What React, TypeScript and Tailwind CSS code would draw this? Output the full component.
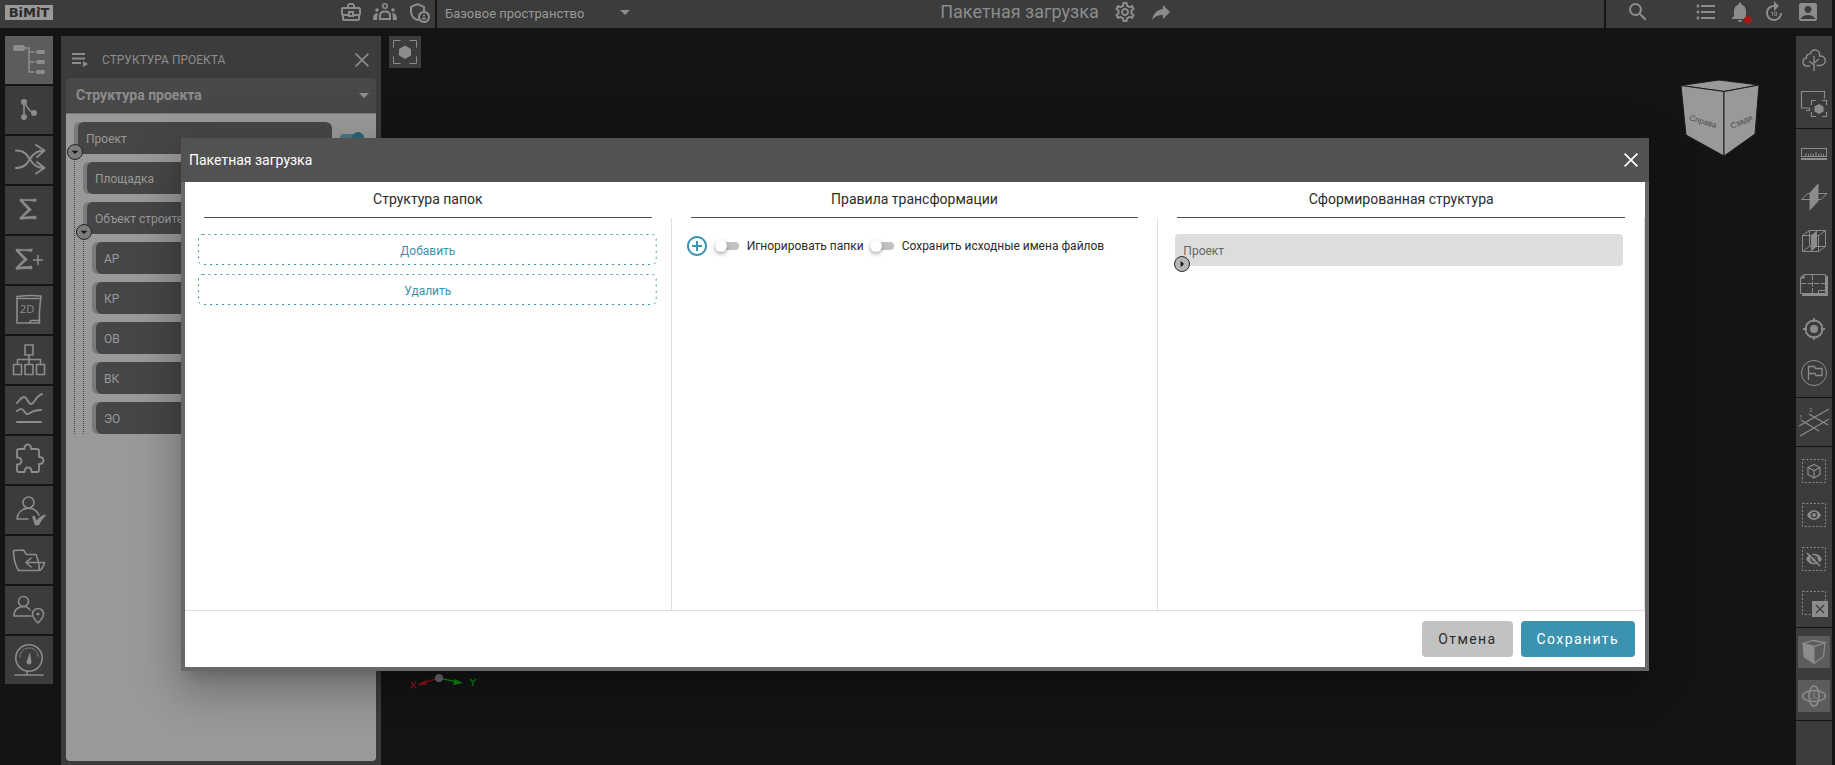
import { useState } from 'react';
import type { ReactNode } from 'react';
import {
  MdAddCircleOutline,
  MdAccountBox,
  MdArrowDropDown,
  MdForward10,
  MdFormatListBulleted,
  MdNotifications,
  MdOutlineAdminPanelSettings,
  MdOutlineBusinessCenter,
  MdOutlineSettings,
  MdReply,
  MdSearch,
} from 'react-icons/md';

interface IconProps {
  children: ReactNode;
}

interface ToolItem {
  label: string;
  icon: ReactNode;
  active?: boolean;
}

// 48px icons for the left rail
function RailIcon({ children }: IconProps) {
  return (
    <svg viewBox="0 0 48 48" className="w-12 h-12" fill="none" stroke="currentColor" strokeWidth="1.6" strokeLinecap="round" strokeLinejoin="round">
      {children}
    </svg>
  );
}

// 32px icons for the right toolbar
function ToolIcon({ children }: IconProps) {
  return (
    <svg viewBox="0 0 32 32" className="w-8 h-8" fill="none" stroke="currentColor" strokeWidth="1">
      {children}
    </svg>
  );
}

function CloseIcon() {
  return (
    <svg viewBox="0 0 14 14" className="w-3.5 h-3.5" fill="none" stroke="currentColor" strokeWidth="1.7">
      <path d="M.6.6l12.8 12.8M13.4.6L.6 13.4" />
    </svg>
  );
}

const railItems: ToolItem[] = [
  {
    label: 'Структура проекта',
    active: true,
    icon: (
      <RailIcon>
        <rect x="8" y="9" width="12" height="6" rx="2.5" fill="currentColor" stroke="none" />
        <path d="M20 12h4v24M24 16h5M24 26h5M24 36h5" />
        <rect x="31" y="14" width="9" height="4" rx="1.8" fill="currentColor" stroke="none" />
        <rect x="31" y="24" width="9" height="4" rx="1.8" fill="currentColor" stroke="none" />
        <rect x="31" y="34" width="9" height="4" rx="1.8" fill="currentColor" stroke="none" />
      </RailIcon>
    ),
  },
  {
    label: 'Версии',
    icon: (
      <RailIcon>
        <g fill="currentColor" stroke="none">
          <circle cx="19" cy="16" r="3" />
          <circle cx="19" cy="31" r="3" />
          <circle cx="29" cy="27" r="3" />
        </g>
        <path d="M19 16v15M20 17c2 5 4 8 9 10" />
      </RailIcon>
    ),
  },
  {
    label: 'Сопоставление',
    icon: (
      <RailIcon>
        <path d="M11 14.5c8 0 11 4 14 9s7 8.500 14 8.500M11 32c8 0 11-4 14-9s7-8.500 14-8.500M31 9l8.500 5.500L32 21M32 26l7.500 6L31 37.5" strokeWidth="1.9" />
      </RailIcon>
    ),
  },
  {
    label: 'Сумма',
    icon: (
      <RailIcon>
        <path d="M31 13v2.500c-5-1-9-1-13-.500l8.500 8.500L18 31c5-.5 9-.5 13-1v3c-5-.5-10-.5-16 .5v-2l8-8-8-8.500v-2c6 .5 11 .5 16 0z" fill="currentColor" strokeWidth=".5" />
      </RailIcon>
    ),
  },
  {
    label: 'Сумма плюс',
    icon: (
      <RailIcon>
        <path d="M31 13v2.500c-5-1-9-1-13-.500l8.500 8.500L18 31c5-.5 9-.5 13-1v3c-5-.5-10-.5-16 .5v-2l8-8-8-8.500v-2c6 .5 11 .5 16 0z" transform="translate(-4)" fill="currentColor" strokeWidth=".5" />
        <path d="M33 19.500v9M28.500 24h9" />
      </RailIcon>
    ),
  },
  {
    label: 'Чертежи 2D',
    icon: (
      <RailIcon>
        <path d="M12 10.500c8-1 16-1.500 24-.500-1 8-2 18-1.500 27H12zM12 12.500h22M24 37l2-2.500h8" />
        <text x="15" y="27" fontSize="11" fill="currentColor" stroke="none" fontFamily="'Open Sans', sans-serif">2D</text>
      </RailIcon>
    ),
  },
  {
    label: 'Организация',
    icon: (
      <RailIcon>
        <rect x="20" y="9" width="8" height="10" />
        <path d="M24 19v9M12.500 28v-4.500h23V28" />
        <rect x="8.500" y="28.500" width="8" height="10" />
        <rect x="20" y="28.500" width="8" height="10" />
        <rect x="31.500" y="28.500" width="8" height="10" />
      </RailIcon>
    ),
  },
  {
    label: 'Графики',
    icon: (
      <RailIcon>
        <path d="M12 17c3-3 4-6 7-6s4 7 7 7 5-8 11-10M12 25c2-2 5-3 7 0s3 4 6 2 7-3 11-3M12 36h24" strokeWidth="1.9" />
      </RailIcon>
    ),
  },
  {
    label: 'Модули',
    icon: (
      <RailIcon>
        <path d="M14 13h5.500c-.5-6 7-6 6.500 0h6q2 0 2 2v6c6-.5 6 7.500 0 7v6q0 2-2 2h-5.500c0-6-6.500-6-7 0H14q-2 0-2-2v-5.500c6 .5 6-7.500 0-7V15q0-2 2-2z" strokeWidth="1.9" />
      </RailIcon>
    ),
  },
  {
    label: 'Согласование',
    icon: (
      <RailIcon>
        <circle cx="23.500" cy="16.500" r="5.500" />
        <path d="M23 33H12c1-13 18-14 22-4" />
        <path d="M28 31l1-.5 3 6c1-3 4-6 8-7-3 2-5 6-6.500 9h-3z" fill="currentColor" />
      </RailIcon>
    ),
  },
  {
    label: 'Импорт',
    icon: (
      <RailIcon>
        <path d="M13.500 34.500c-3-5-5-13-5-20l10-.5 3 4.500H31c2 5 4 10 3 16zM34.500 34.500c2-1 4-4 5-8H22M26 22l-5 4.500 5 4.500" />
      </RailIcon>
    ),
  },
  {
    label: 'Геопозиция',
    icon: (
      <RailIcon>
        <circle cx="18.500" cy="15.500" r="5" />
        <path d="M26 30H9c0-10 12-12 16-6" />
        <path d="M33 37c-4-4-5.500-6-5.500-9a5.500 5.500 0 0111 0c0 3-1.500 5-5.500 9z" />
        <circle cx="33" cy="28" r="1.500" fill="currentColor" stroke="none" />
      </RailIcon>
    ),
  },
  {
    label: 'Показатели',
    icon: (
      <RailIcon>
        <circle cx="24" cy="22" r="13.200" />
        <path d="M15 21a9 9 0 0118 0" strokeDasharray="2 1.500" strokeWidth="1" />
        <path d="M25 16l1.500 10a2.500 2.500 0 01-5 0z" fill="currentColor" stroke="none" />
        <path d="M22 35v3M10 39h28" />
      </RailIcon>
    ),
  },
];

const toolGroups: ToolItem[][] = [
  [
    {
      label: 'Окружение',
      icon: (
        <ToolIcon>
          <path d="M12 22H9c-5 0-5.500-7-.5-8-1-4 4-4.500 4-4 1.500-6 10-5 9 2 7-1 8 9 1 9.500h-4" strokeWidth="1.400" />
          <path d="M16 12v15M16 21l-5-4M16 19l5-4" strokeWidth="1.400" />
        </ToolIcon>
      ),
    },
    {
      label: 'Захват экрана',
      icon: (
        <ToolIcon>
          <path d="M26.500 10.500v-7h-23v16.500h8M8 22.500h3.500V20" strokeWidth="1.200" />
          <path d="M13.500 17v-4.500H18M24 12.500h4.500V17M28.500 24v4.500H24M18 28.500h-4.500V24" strokeWidth="1.200" />
          <path d="M21 16l4.500 2.500v5L21 26l-4.500-2.500v-5z" fill="currentColor" stroke="none" />
        </ToolIcon>
      ),
    },
  ],
  [
    {
      label: 'Линейка',
      icon: (
        <ToolIcon>
          <rect x="3.500" y="11.500" width="25" height="8" />
          <path d="M3 22h26" strokeWidth="2" />
          <path d="M8 19v-3M10.500 19v-2M13 19v-3M15.500 19v-2M18 19v-4M20.500 19v-2M23 19v-3M25.500 19v-2" />
        </ToolIcon>
      ),
    },
    {
      label: 'Плоскость сечения',
      icon: (
        <ToolIcon>
          <path d="M20.500 2v18L11.500 30V12z" fill="currentColor" stroke="none" />
          <path d="M3.500 18.500L10 12.500h19l-6 6z" />
        </ToolIcon>
      ),
    },
    {
      label: 'Объём сечения',
      icon: (
        <ToolIcon>
          <rect x="4.500" y="10.500" width="16" height="16" />
          <path d="M4.500 10.500l7-5h16v16l-7 5M20.500 10.500l7-5M11.500 5.500v16h16M4.500 26.500l7-5" />
          <path d="M13 10.500l6-5v16l-6 5z" fill="currentColor" stroke="none" />
        </ToolIcon>
      ),
    },
    {
      label: 'Лист',
      icon: (
        <ToolIcon>
          <path d="M6 5.500h21.500v19h-25V9z" />
          <path d="M6.500 5v4.500H2z" fill="currentColor" stroke="none" />
          <path d="M4 26h25V7" strokeWidth="2" />
          <path d="M14.500 6v19M3 14.500h25" strokeDasharray="5 1.500" />
          <path d="M20.500 24v-2.500h7" />
        </ToolIcon>
      ),
    },
    {
      label: 'Центрировать',
      icon: (
        <ToolIcon>
          <circle cx="16" cy="16" r="8.500" strokeWidth="1.800" />
          <circle cx="16" cy="16" r="4" fill="currentColor" stroke="none" />
          <path d="M16 5v4M16 23v4M5 16h4M23 16h4" strokeWidth="1.800" />
        </ToolIcon>
      ),
    },
    {
      label: 'Замечания',
      icon: (
        <ToolIcon>
          <circle cx="16" cy="16" r="12.500" />
          <path d="M10.500 23V9.500h6l1 2h6.500v7h-6l-1-2h-6" strokeWidth="1.300" />
        </ToolIcon>
      ),
    },
  ],
  [
    {
      label: 'Оси',
      icon: (
        <ToolIcon>
          <path d="M1 20L31 3M2 30l29-17M3 14l18 11M11 8l19 11" strokeWidth="1.200" />
          <text x="1" y="13" fontSize="6" fill="currentColor" stroke="none">1</text>
          <text x="11" y="6" fontSize="6" fill="currentColor" stroke="none">2</text>
        </ToolIcon>
      ),
    },
  ],
  [
    {
      label: 'Выделить',
      icon: (
        <ToolIcon>
          <rect x="4.500" y="4.500" width="23" height="23" strokeDasharray="2 1.800" />
          <path d="M16 9.500l6 3v7l-6 3.500-6-3.500v-7zM10 12.500l6 3 6-3M16 15.500V23" strokeWidth="1.200" />
        </ToolIcon>
      ),
    },
    {
      label: 'Показать',
      icon: (
        <ToolIcon>
          <rect x="4.500" y="4.500" width="23" height="23" strokeDasharray="2 1.800" />
          <path d="M9 16c3-6.500 11-6.500 14 0-3 6.500-11 6.500-14 0z" fill="currentColor" stroke="none" />
          <circle cx="16" cy="16" r="2.600" stroke="#3c3c3c" strokeWidth="1.300" />
        </ToolIcon>
      ),
    },
    {
      label: 'Скрыть',
      icon: (
        <ToolIcon>
          <rect x="4.500" y="4.500" width="23" height="23" strokeDasharray="2 1.800" />
          <path d="M8 16c3-7 13-7 16 0-3 7-13 7-16 0z" fill="currentColor" stroke="none" />
          <circle cx="16" cy="16" r="3" stroke="#3c3c3c" strokeWidth="1.300" />
          <path d="M10.500 9L23.500 22" stroke="#3c3c3c" strokeWidth="1.500" />
          <path d="M9 10l13 13" strokeWidth="1.500" />
        </ToolIcon>
      ),
    },
    {
      label: 'Сбросить выделение',
      icon: (
        <ToolIcon>
          <rect x="4.500" y="4.500" width="23" height="23" strokeDasharray="2 1.800" />
          <rect x="14" y="14" width="16" height="16" fill="currentColor" stroke="none" />
          <path d="M18 18l8 8M26 18l-8 8" stroke="#3c3c3c" strokeWidth="1.300" />
        </ToolIcon>
      ),
    },
  ],
  [
    {
      label: 'Куб навигации',
      active: true,
      icon: (
        <ToolIcon>
          <path d="M5 8l11 3.500V27.500L6 21z" fill="currentColor" />
          <path d="M5 7.500L15 4.500l12 2L16 10.500zM27 7l-1.500 13.500L16 27.500" strokeWidth="1.300" />
        </ToolIcon>
      ),
    },
    {
      label: 'Вращение',
      active: true,
      icon: (
        <ToolIcon>
          <ellipse cx="16" cy="16" rx="11.500" ry="5.500" strokeWidth="1.600" />
          <ellipse cx="16" cy="16" rx="5" ry="10" strokeWidth="1.600" />
          <path d="M16 12.500v4l-3 3M16 16.500l3.500 2.500" />
        </ToolIcon>
      ),
    },
  ],
];

function Switch({ label, defaultChecked = false, dimmed = false }: { label: string; defaultChecked?: boolean; dimmed?: boolean }) {
  return (
    <span className="relative flex items-center w-6 h-3 shrink-0">
      <input type="checkbox" aria-label={label} defaultChecked={defaultChecked} className="peer absolute inset-0 w-6 h-3 opacity-0 z-10 cursor-pointer" />
      <span className={`w-6 h-2 rounded-full ${dimmed ? 'bg-[#4f7480]' : 'bg-[#c2c2c2]'}`} />
      <span
        className={`absolute left-0 size-3 rounded-full peer-checked:left-3 ${
          dimmed ? 'bg-[#2a6377]' : 'bg-white shadow-[0_2px_4px_rgba(0,0,0,0.35)]'
        }`}
      />
    </span>
  );
}

interface TreeNodeData {
  name: string;
  children?: TreeNodeData[];
}

const projectTree: TreeNodeData = {
  name: 'Проект',
  children: [
    { name: 'Площадка' },
    {
      name: 'Объект строительства',
      children: [{ name: 'АР' }, { name: 'КР' }, { name: 'ОВ' }, { name: 'ВК' }, { name: 'ЭО' }],
    },
  ],
};

function TreeNode({ node }: { node: TreeNodeData }) {
  const [open, setOpen] = useState(true);

  return (
    <li>
      <div className="relative flex items-center gap-2 pr-3">
        <div className="flex-1 h-8 flex items-center rounded-md bg-[#7a7a7a] pl-1 overflow-hidden">
          <span className="flex-1 h-8 flex items-center rounded-md bg-[#464646] pl-2 pt-0.5 text-xs text-[#999999] whitespace-nowrap">
            {node.name}
          </span>
        </div>
        <Switch label={`Видимость: ${node.name}`} defaultChecked dimmed />
        {node.children && (
          <button
            onClick={() => setOpen(!open)}
            aria-label="Свернуть"
            className="absolute -left-[7px] -bottom-1.5 z-10 size-4 rounded-full border border-[#222222] bg-[#7c7c7c] text-[#141414] flex items-center justify-center"
          >
            <MdArrowDropDown size={16} className="shrink-0" />
          </button>
        )}
      </div>
      {node.children && open && (
        <ul className="border-l border-dotted border-[#444444] pl-2 pt-2 flex flex-col gap-2">
          {node.children.map((child) => (
            <TreeNode key={child.name} node={child} />
          ))}
        </ul>
      )}
    </li>
  );
}

function Header() {
  return (
    <header className="h-7 shrink-0 mr-[3px] flex gap-0.5 text-[#8c8c8c]">
      <div className="flex-1 bg-[#3c3c3c] flex items-center justify-between pl-[5px] pr-1 pb-1">
        <a href="#" className="relative w-12 h-[15px] bg-[#999999] text-[#2b2b2b] flex items-center justify-center font-['DejaVu_Sans'] font-bold text-[13px] leading-none">
          BiMiT
          <span className="absolute left-[33px] top-[3px] size-0.5 bg-[#a01010]" />
        </a>
        <div className="flex items-center gap-2.5">
          <button aria-label="Портфель"><MdOutlineBusinessCenter size={24} /></button>
          <button aria-label="Команда">
            <svg viewBox="0 0 24 24" className="w-6 h-6" fill="currentColor">
              <path d="M12 3a3 3 0 100 6 3 3 0 000-6zm0 1.600a1.400 1.400 0 110 2.800 1.400 1.400 0 010-2.800z" />
              <path d="M6 20v-4c0-3.500 2-5.500 6-5.500s6 2 6 5.500v4zm2-2h8v-2c0-2.500-1-3.600-4-3.600S8 13.500 8 16z" fillRule="evenodd" />
              <circle cx="4" cy="10" r="1.800" />
              <circle cx="20" cy="10" r="1.800" />
              <path d="M0 20c0-4 1-7 5-7-.8 2-.8 4-.8 7zM24 20c0-4-1-7-5-7 .8 2 .8 4 .8 7z" />
            </svg>
          </button>
          <button aria-label="Права доступа"><MdOutlineAdminPanelSettings size={24} /></button>
        </div>
      </div>
      <div className="w-[1167px] bg-[#3c3c3c] flex items-center pb-1 pl-2">
        <label className="relative flex items-center w-48">
          <select aria-label="Пространство" className="appearance-none w-full bg-transparent text-[13px] leading-4 pt-1 text-[#999999] outline-none">
            <option>Базовое пространство</option>
          </select>
          <MdArrowDropDown size={24} className="absolute right-0 pointer-events-none" />
        </label>
        <div className="flex-1 flex items-center justify-center gap-3.5 pr-32">
          <h1 className="text-lg leading-6">Пакетная загрузка</h1>
          <div className="flex gap-3">
            <button aria-label="Настройки"><MdOutlineSettings size={24} /></button>
            <button aria-label="Поделиться"><MdReply size={24} className="-scale-x-100" /></button>
          </div>
        </div>
      </div>
      <div className="w-[226px] bg-[#3c3c3c] flex items-center pb-1 pl-5 pr-3">
        <button aria-label="Поиск"><MdSearch size={24} /></button>
        <div className="ml-auto flex items-center gap-2.5">
          <button aria-label="Список"><MdFormatListBulleted size={24} /></button>
          <button aria-label="Уведомления" className="relative">
            <MdNotifications size={24} />
            <span className="absolute right-0 bottom-0 size-2 rounded-full bg-[#a01818]" />
          </button>
          <button aria-label="Обновить"><MdForward10 size={24} /></button>
          <button aria-label="Профиль"><MdAccountBox size={24} /></button>
        </div>
      </div>
    </header>
  );
}

function Viewport() {
  return (
    <main className="relative flex-1">
      <button aria-label="Показать всё" className="ml-2 size-8 bg-[#3c3c3c] text-[#8c8c8c]">
        <ToolIcon>
          <path d="M4.500 11.500v-7h7M20.500 4.500h7v7M27.500 20.500v7h-7M11.500 27.500h-7v-7" />
          <path d="M16 9.500l6 3.500v6.500L16 23l-6-3.500V13z" fill="currentColor" stroke="none" />
        </ToolIcon>
      </button>
      {/* View cube */}
      <svg viewBox="0 0 80 78" className="absolute right-9 top-[43px] w-20 h-[78px]" fill="#999999" stroke="#1c1c1c" strokeWidth="1">
        <path d="M1 6.500L39 1l40 5-35 6.500z" />
        <path d="M1 6.500l43 6V77L6 56z" />
        <path d="M79 6l-35 6.500V77l31-22z" />
        <g fill="#4a4a4a" stroke="none" fontFamily="'Liberation Sans', sans-serif">
          <text x="9" y="41" transform="rotate(17 9 41)" fontSize="8">Справа</text>
          <text x="52" y="50" transform="rotate(-25 52 50)" fontSize="8">Сзади</text>
        </g>
      </svg>
      {/* Axis gizmo */}
      <svg viewBox="0 0 70 24" className="absolute left-7 top-[630px] w-[70px] h-6" fill="none">
        <path d="M30 12L14 17" stroke="#8a1414" strokeWidth="1.500" />
        <path d="M8 19l9-5 1 5z" fill="#8a1414" />
        <path d="M30 12l18 4" stroke="#0f8a14" strokeWidth="1.500" />
        <path d="M54 17l-10 2 2-6z" fill="#0f8a14" />
        <circle cx="30" cy="12" r="4" fill="#6c6c78" />
        <path d="M2 16l5 6M7 16l-5 6" stroke="#8a1414" strokeWidth="1.300" />
        <path d="M61 13l3 3 3-3M64 16v4" stroke="#0f8a14" strokeWidth="1.300" />
      </svg>
    </main>
  );
}

function Column({ title, children }: { title: string; children: ReactNode }) {
  return (
    <section className="flex-1 flex flex-col">
      <h3 className="ml-[19px] mr-5 h-9 border-b border-[#4d4d4d] text-sm leading-[34px] text-center text-[#2b2b2b]">{title}</h3>
      <div className="flex-1 border-r border-[#dddddd] pt-4 px-[13px]">{children}</div>
    </section>
  );
}

// Wide-spaced dashes, which border-dashed can't do
function DashedButton({ children }: IconProps) {
  return (
    <button className="relative h-8 pt-0.5 text-xs text-[#3b93b0]">
      <svg className="absolute inset-0 w-full h-full p-px overflow-visible" fill="none" stroke="currentColor">
        <rect x="-0.5" y="-0.5" width="100%" height="100%" rx="4" strokeDasharray="2 4" />
      </svg>
      {children}
    </button>
  );
}

function BatchDialog() {
  return (
    <div className="fixed inset-0 flex items-center justify-center pt-11 pr-[5px]">
      <div role="dialog" aria-label="Пакетная загрузка" className="w-[80vw] bg-[#686868] shadow-[0_11px_15px_-7px_rgba(0,0,0,0.2),0_24px_38px_3px_rgba(0,0,0,0.14),0_9px_46px_8px_rgba(0,0,0,0.12)]">
        <div className="h-11 bg-[#525252] flex items-center justify-between pl-2 pr-[11px] text-white">
          <h2 className="text-sm">Пакетная загрузка</h2>
          <button aria-label="Закрыть"><CloseIcon /></button>
        </div>
        <div className="mx-1 mb-1 bg-white">
          <div className="flex min-h-[428px]">
            <Column title="Структура папок">
              <div className="flex flex-col gap-2">
                <DashedButton>Добавить</DashedButton>
                <DashedButton>Удалить</DashedButton>
              </div>
            </Column>
            <Column title="Правила трансформации">
              <div className="flex items-center gap-1.5 text-xs text-[#2b2b2b]">
                <button aria-label="Добавить правило" className="text-[#3b93b0]"><MdAddCircleOutline size={24} /></button>
                <label className="flex items-center gap-2">
                  <Switch label="Игнорировать папки" />
                  Игнорировать папки
                </label>
                <label className="flex items-center gap-2">
                  <Switch label="Сохранить исходные имена файлов" />
                  Сохранить исходные имена файлов
                </label>
              </div>
            </Column>
            <Column title="Сформированная структура">
              <div className="relative ml-1 mr-2 h-8 rounded bg-[#dddddd] flex items-center pl-2 pt-0.5 text-xs text-[#666666]">
                Проект
                <button
                  aria-label="Развернуть"
                  className="absolute -left-px -bottom-1.5 size-4 rounded-full border border-[#2b2b2b] bg-[#b5b5b5] text-[#141414] flex items-center justify-center"
                >
                  <MdArrowDropDown size={16} className="-rotate-90 shrink-0" />
                </button>
              </div>
            </Column>
          </div>
          <div className="border-t border-[#dddddd] h-[57px] flex items-center justify-end gap-2 pr-2.5 text-sm tracking-widest">
            <button className="h-9 px-4 rounded bg-[#c2c2c2] text-[#2b2b2b]">Отмена</button>
            <button className="h-9 px-4 rounded bg-[#3b93b0] text-white">Сохранить</button>
          </div>
        </div>
      </div>
    </div>
  );
}

export default function App() {
  return (
    <div className="h-screen overflow-hidden flex flex-col bg-[#141414] font-[Roboto,sans-serif]">
      <Header />
      <div className="flex-1 min-h-0 flex pt-2 pl-[5px] pr-[3px]">
        <nav className="flex flex-col gap-0.5 text-[#8c8c8c]">
          {railItems.map((item) => (
            <button key={item.label} aria-label={item.label} className={`size-12 ${item.active ? 'bg-[#5c5c5c]' : 'bg-[#3c3c3c]'}`}>
              {item.icon}
            </button>
          ))}
        </nav>

        <aside className="ml-2 w-80 bg-[#3c3c3c] px-[5px] pb-1 flex flex-col text-[#8c8c8c]">
          <div className="h-[42px] pt-1.5 flex items-center pl-1 pr-[7px]">
            <svg viewBox="0 0 24 24" className="w-6 h-6" fill="currentColor">
              <path d="M2 5h13v2H2zM2 9.500h13v2H2zM2 14h9v2H2zM13 13l5 3-5 3z" />
            </svg>
            <h2 className="ml-2 text-xs">СТРУКТУРА ПРОЕКТА</h2>
            <button aria-label="Закрыть панель" className="ml-auto"><CloseIcon /></button>
          </div>
          <label className="relative flex items-center h-9 pb-0.5 rounded-t bg-[#484848] border-b border-[#777777]">
            <select aria-label="Вид структуры" className="appearance-none w-full bg-transparent pl-2.5 text-sm font-bold text-[#8c8c8c] outline-none">
              <option>Структура проекта</option>
            </select>
            <MdArrowDropDown size={24} className="absolute right-0 pointer-events-none" />
          </label>
          <div className="flex-1 bg-[#999999] rounded-b pt-2 pl-2">
            <ul>
              <TreeNode node={projectTree} />
            </ul>
          </div>
        </aside>

        <Viewport />

        <aside className="w-9 bg-[#3c3c3c] text-[#8c8c8c]">
          {toolGroups.map((group, i) => (
            <div key={i} className="py-0.5 border-b border-[#141414]">
              {group.map((item) => (
                <div key={item.label} className="h-11 flex items-center justify-center">
                  <button aria-label={item.label} className={`size-8 ${item.active ? 'bg-[#5c5c5c]' : ''}`}>
                    {item.icon}
                  </button>
                </div>
              ))}
            </div>
          ))}
        </aside>
      </div>
      <BatchDialog />
    </div>
  );
}
